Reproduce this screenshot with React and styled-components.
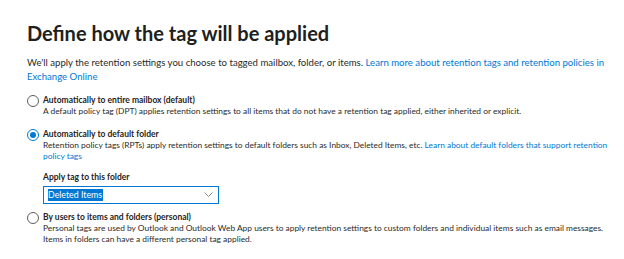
import React, { useState } from "react";
import styled, { createGlobalStyle } from "styled-components";

const GlobalStyle = createGlobalStyle`
  body {
    margin: 0;
    background: #ffffff;
    font-family: Lato, "Open Sans", sans-serif;
    color: #323130;
  }
`;

const Page = styled.div`
  padding: 20px 10px 0 27px;
  width: 624px;
  box-sizing: border-box;
`;

const Title = styled.h2`
  margin: 0;
  font-size: 20px;
  line-height: 26px;
  font-weight: 700;
  color: #201f1e;
`;

const Intro = styled.p`
  margin: 10px 0 0;
  font-size: 9.6px;
  line-height: 14px;
  white-space: nowrap;
  color: #2b2a29;
`;

const Link = styled.a`
  color: #0078d4;
  text-decoration: none;
`;

const Options = styled.div`
  display: flex;
  flex-direction: column;
  margin-top: 10px;
`;

const Option = styled.label`
  display: grid;
  grid-template-columns: 16px 1fr;
  align-items: start;
  margin-top: ${(p) => p.$space || 0}px;
  cursor: pointer;
`;

const Circle = styled.span`
  width: 12px;
  height: 12px;
  margin-top: 1px;
  box-sizing: border-box;
  border-radius: 50%;
  border: 1px solid ${(p) => (p.checked ? "#0078d4" : "#605e5c")};
  display: flex;
  align-items: center;
  justify-content: center;

  &::after {
    content: "";
    width: 6px;
    height: 6px;
    border-radius: 50%;
    background: ${(p) => (p.checked ? "#0078d4" : "transparent")};
  }
`;

const OptionText = styled.div`
  display: flex;
  flex-direction: column;
  white-space: nowrap;
`;

const OptionLabel = styled.span`
  font-size: 8.5px;
  line-height: 12px;
  font-weight: 700;
  color: #252423;
`;

const OptionDesc = styled.span`
  font-size: 8.4px;
  line-height: 11.5px;
  color: #2b2a29;
`;

const FolderField = styled.div`
  display: flex;
  flex-direction: column;
  margin: 8px 0 0 16px;
  gap: 3px;
`;

const FieldLabel = styled.span`
  font-size: 8.5px;
  line-height: 12px;
  font-weight: 700;
  color: #252423;
`;

const Select = styled.div`
  width: 176px;
  height: 18px;
  box-sizing: border-box;
  border: 1px solid #0078d4;
  display: flex;
  align-items: center;
  justify-content: space-between;
  padding: 0 1px 0 4px;
`;

const Selected = styled.span`
  background: #0078d4;
  color: #ffffff;
  font-size: 8.8px;
  line-height: 12px;
  padding-right: 1px;
`;

const options = [
  {
    id: "mailbox",
    space: 0,
    label: "Automatically to entire mailbox (default)",
    desc: [
      "A default policy tag (DPT) applies retention settings to all items that do not have a retention tag applied, either inherited or explicit.",
    ],
  },
  {
    id: "folder",
    space: 10,
    label: "Automatically to default folder",
    desc: [
      <>
        Retention policy tags (RPTs) apply retention settings to default folders
        such as Inbox, Deleted Items, etc.{" "}
        <Link href="#">Learn about default folders that support retention</Link>
      </>,
      <Link href="#">policy tags</Link>,
    ],
  },
  {
    id: "personal",
    space: 7,
    label: "By users to items and folders (personal)",
    desc: [
      "Personal tags are used by Outlook and Outlook Web App users to apply retention settings to custom folders and individual items such as email messages.",
      "Items in folders can have a different personal tag applied.",
    ],
  },
];

function Chevron() {
  return (
    <svg width="16" height="8" viewBox="0 0 16 8" fill="none">
      <path d="M3.5 1.5 L7.5 5.5 L11.5 1.5" stroke="#8a8886" strokeWidth="1" />
    </svg>
  );
}

export default function App() {
  const [choice, setChoice] = useState("folder");

  return (
    <Page>
      <GlobalStyle />
      <Title>Define how the tag will be applied</Title>
      <Intro>
        We'll apply the retention settings you choose to tagged mailbox, folder,
        or items.{" "}
        <Link href="#">Learn more about retention tags and retention policies in</Link>
        <br />
        <Link href="#">Exchange Online</Link>
      </Intro>
      <Options>
        {options.map((o) => (
          <React.Fragment key={o.id}>
            <Option $space={o.space} onClick={() => setChoice(o.id)}>
              <Circle checked={choice === o.id} />
              <OptionText>
                <OptionLabel>{o.label}</OptionLabel>
                {o.desc.map((line, i) => (
                  <OptionDesc key={i}>{line}</OptionDesc>
                ))}
              </OptionText>
            </Option>
            {o.id === "folder" && choice === "folder" && (
              <FolderField>
                <FieldLabel>Apply tag to this folder</FieldLabel>
                <Select>
                  <Selected>Deleted Items</Selected>
                  <Chevron />
                </Select>
              </FolderField>
            )}
          </React.Fragment>
        ))}
      </Options>
    </Page>
  );
}
